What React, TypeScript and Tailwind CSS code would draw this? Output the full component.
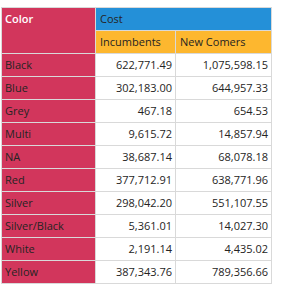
import React from 'react';

const rows: [string, string, string][] = [
  ['Black', '622,771.49', '1,075,598.15'],
  ['Blue', '302,183.00', '644,957.33'],
  ['Grey', '467.18', '654.53'],
  ['Multi', '9,615.72', '14,857.94'],
  ['NA', '38,687.14', '68,078.18'],
  ['Red', '377,712.91', '638,771.96'],
  ['Silver', '298,042.20', '551,107.55'],
  ['Silver/Black', '5,361.01', '14,027.30'],
  ['White', '2,191.14', '4,435.02'],
  ['Yellow', '387,343.76', '789,356.66'],
];

export default function App() {
  return (
    <div className="w-[281px] h-[294px] bg-white pt-[7px] pl-[1px] text-[11px] text-[#252423]" style={{ fontFamily: '"Open Sans", sans-serif' }}>
      <div className="inline-grid grid-cols-[93px_79px_95px] auto-rows-[22px] gap-px p-px bg-[#d9d9d9]">
        {/* header */}
        <div className="row-span-2 bg-[#d2365c] px-[3px] leading-[22px] font-semibold text-white">Color</div>
        <div className="col-span-2 bg-[#2490d8] px-[4px] leading-[22px]">Cost</div>
        <div className="bg-[#fdb72f] px-[4px] leading-[22px]">Incumbents</div>
        <div className="bg-[#fdb72f] px-[4px] leading-[22px]">New Comers</div>

        {rows.map(([name, inc, nc]) => (
          <React.Fragment key={name}>
            <div className="bg-[#d2365c] px-[3px] leading-[22px]">{name}</div>
            <div className="bg-white pr-[3px] text-right leading-[22px]">{inc}</div>
            <div className="bg-white pr-[3px] text-right leading-[22px]">{nc}</div>
          </React.Fragment>
        ))}
      </div>
    </div>
  );
}
